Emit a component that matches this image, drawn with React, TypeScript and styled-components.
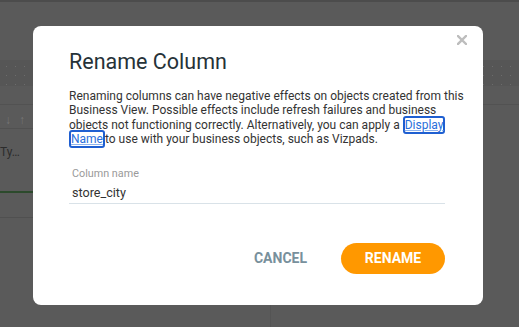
import React from "react";
import styled, { createGlobalStyle } from "styled-components";

const GlobalStyle = createGlobalStyle`
  html, body {
    margin: 0;
    padding: 0;
    background: #5a5a5a;
    font-family: Roboto, "Liberation Sans", Arial, sans-serif;
  }
  * {
    box-sizing: border-box;
  }
`;

const Page = styled.div`
  height: 100vh;
  display: flex;
  flex-direction: column;
  background: #5a5a5a;
  overflow: hidden;
`;

const TopRule = styled.div`
  height: 2px;
  background: #4c4c4c;
`;

const HeaderSpace = styled.div`
  height: 58px;
`;

const DottedBand = styled.div`
  height: 26px;
  background-color: #565656;
  background-image: radial-gradient(circle, #6c6c6c 0.8px, transparent 1px);
  background-size: 9px 9px;
  background-position: 2px 2px;
`;

const BandGap = styled.div`
  height: 19px;
  border-bottom: 1px solid #525252;
`;

const Columns = styled.div`
  flex: 1;
  display: grid;
  grid-template-columns: 270px 1fr;
`;

const LeftColumn = styled.div`
  display: flex;
  flex-direction: column;
`;

const RightColumn = styled.div`
  border-left: 1px solid #545454;
`;

const SortRow = styled.div`
  height: 24px;
  display: flex;
  align-items: flex-end;
  gap: 8px;
  padding: 0 0 1px 5px;
  border-bottom: 1px solid #515151;
  color: #767676;
  font-size: 12px;
  font-weight: 700;
`;

const CellRow = styled.div<{ $height: number; $line: string; $thick?: boolean }>`
  height: ${({ $height }) => $height}px;
  padding: 16px 0 0 0;
  border-bottom: ${({ $thick }) => ($thick ? "2px" : "1px")} solid ${({ $line }) => $line};
  color: #2c2c2c;
  font-size: 12px;
`;

const Overlay = styled.div`
  position: fixed;
  inset: 0;
  display: flex;
  align-items: flex-start;
  justify-content: flex-start;
  padding: 26px 0 0 33px;
`;

const Dialog = styled.div`
  position: relative;
  width: 450px;
  height: 279px;
  background: #ffffff;
  border-radius: 8px;
  padding: 24px 16px 0 36px;
  display: flex;
  flex-direction: column;
`;

const CloseButton = styled.button`
  position: absolute;
  top: 9px;
  right: 16px;
  width: 10px;
  height: 10px;
  padding: 0;
  border: none;
  background: none;
  display: flex;
`;

const Title = styled.h2`
  margin: 0;
  font-size: 21.5px;
  line-height: 24px;
  font-weight: 400;
  color: #263238;
`;

const Body = styled.p`
  margin: 15px 0 0 0;
  font-size: 12px;
  line-height: 14.4px;
  color: #333333;
`;

const DisplayLink = styled.a`
  color: #2a6fdb;
  text-decoration: underline;
  text-decoration-color: #8fb4ee;
  border: 2px solid #1f5fd1;
  border-radius: 3px;
  -webkit-box-decoration-break: clone;
  box-decoration-break: clone;
`;

const Field = styled.div`
  margin: 20px 22px 0 0;
  display: flex;
  flex-direction: column;
`;

const FieldLabel = styled.label`
  padding-left: 3px;
  font-size: 10.8px;
  line-height: 13px;
  color: #9a9a9a;
`;

const FieldInput = styled.input`
  margin-top: 5px;
  padding: 0 3px 3px 3px;
  border: none;
  border-bottom: 1px solid #d9e2e8;
  outline: none;
  font-family: inherit;
  font-size: 12.6px;
  line-height: 16px;
  height: 19px;
  color: #333333;
  background: transparent;
`;

const Actions = styled.div`
  margin: 39px 22px 0 0;
  display: flex;
  justify-content: flex-end;
  align-items: center;
  gap: 34px;
`;

const ActionButton = styled.button<{ $primary?: boolean }>`
  font-family: inherit;
  font-size: 14px;
  font-weight: 700;
  text-transform: uppercase;
  border: none;
  cursor: pointer;
  height: 31px;
  border-radius: 16px;
  padding: ${({ $primary }) => ($primary ? "0 22px" : "0")};
  min-width: ${({ $primary }) => ($primary ? "104px" : "0")};
  background: ${({ $primary }) => ($primary ? "#ff9800" : "transparent")};
  color: ${({ $primary }) => ($primary ? "#ffffff" : "#78909c")};
`;

const App = () => {
  return (
    <>
      <GlobalStyle />
      <Page>
        <TopRule />
        <HeaderSpace />
        <DottedBand />
        <BandGap />
        <Columns>
          <LeftColumn>
            <SortRow>
              <span>↓</span>
              <span>↑</span>
            </SortRow>
            <CellRow $height={64} $line="#2c4a2c" $thick>
              Ty…
            </CellRow>
            <CellRow $height={25} $line="#505050" />
          </LeftColumn>
          <RightColumn />
        </Columns>
      </Page>
      <Overlay>
        <Dialog role="dialog">
          <CloseButton aria-label="Close">
            <svg width="10" height="10" viewBox="0 0 10 10">
              <path d="M1 1 L9 9 M9 1 L1 9" stroke="#bdbdbd" strokeWidth="2.4" strokeLinecap="square" />
            </svg>
          </CloseButton>
          <Title>Rename Column</Title>
          <Body>
            Renaming columns can have negative effects on objects created from this Business View.
            Possible effects include refresh failures and business objects not functioning correctly.
            Alternatively, you can apply a <DisplayLink href="#">Display Name</DisplayLink>to use with
            your business objects, such as Vizpads.
          </Body>
          <Field>
            <FieldLabel>Column name</FieldLabel>
            <FieldInput defaultValue="store_city" />
          </Field>
          <Actions>
            <ActionButton>Cancel</ActionButton>
            <ActionButton $primary>Rename</ActionButton>
          </Actions>
        </Dialog>
      </Overlay>
    </>
  );
};

export default App;
